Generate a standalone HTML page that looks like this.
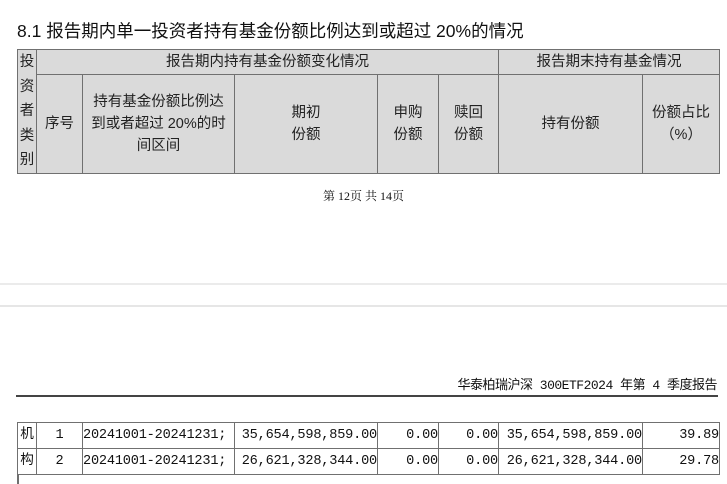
<!DOCTYPE html>
<html><head><meta charset="utf-8"><style>
body{margin:0;width:727px;height:480px;background:#fff;position:relative;overflow:hidden;font-family:"Liberation Serif","Noto Serif CJK SC","Noto Sans CJK SC",serif;color:#111}
.a{position:absolute}
.title{left:17px;top:18px;font-size:17.5px;white-space:nowrap;font-family:"Liberation Sans","Noto Sans CJK SC",sans-serif}
table{position:absolute;border-collapse:collapse;table-layout:fixed}
td{border:1.5px solid #707070;padding:0;text-align:center;font-family:"Liberation Sans","Noto Sans CJK SC",sans-serif;font-size:14.5px;color:#222;line-height:22px}
.h td{background:#dadada}
.d td{font-family:"Liberation Mono","Noto Sans CJK SC",monospace;font-size:13.6px;letter-spacing:-0.2px;color:#111;height:25px;line-height:25px;white-space:nowrap;overflow:hidden}
.r{text-align:right}
</style></head><body>
<div class="a title">8.1 报告期内单一投资者持有基金份额比例达到或超过 20%的情况</div>
<table class="h" style="left:17px;top:49px;width:702px">
<colgroup><col style="width:19px"><col style="width:46px"><col style="width:152px"><col style="width:143px"><col style="width:61px"><col style="width:60px"><col style="width:144px"><col style="width:77px"></colgroup>
<tr style="height:25px"><td rowspan="2" style="line-height:24.5px;vertical-align:top">投<br>资<br>者<br>类<br>别</td><td colspan="5">报告期内持有基金份额变化情况</td><td colspan="2">报告期末持有基金情况</td></tr>
<tr style="height:99px"><td>序号</td><td>持有基金份额比例达<br>到或者超过 20%的时<br>间区间</td><td>期初<br>份额</td><td>申购<br>份额</td><td>赎回<br>份额</td><td>持有份额</td><td>份额占比<br>（%）</td></tr>
</table>
<div class="a" style="left:0;width:727px;top:187px;text-align:center;font-size:12px">第 12页 共 14页</div>
<div class="a" style="left:0;width:727px;top:283px;height:2px;background:#ebebeb"></div>
<div class="a" style="left:0;width:727px;top:305px;height:2px;background:#e6e6e6"></div>
<div class="a" style="right:10px;top:374px;font-size:13px;font-family:'Liberation Mono','Noto Sans CJK SC',monospace;letter-spacing:-0.5px">华泰柏瑞沪深 300ETF2024 年第 4 季度报告</div>
<div class="a" style="left:16px;width:702px;top:395px;height:2px;background:#444"></div>
<table class="d" style="left:17px;top:422px;width:702px">
<colgroup><col style="width:19px"><col style="width:46px"><col style="width:152px"><col style="width:143px"><col style="width:61px"><col style="width:60px"><col style="width:144px"><col style="width:77px"></colgroup>
<tr><td>机</td><td>1</td><td style="text-align:left">20241001-20241231;</td><td class="r">35,654,598,859.00</td><td class="r">0.00</td><td class="r">0.00</td><td class="r">35,654,598,859.00</td><td class="r">39.89</td></tr>
<tr><td>构</td><td>2</td><td style="text-align:left">20241001-20241231;</td><td class="r">26,621,328,344.00</td><td class="r">0.00</td><td class="r">0.00</td><td class="r">26,621,328,344.00</td><td class="r">29.78</td></tr>
</table>
<div class="a" style="left:17px;top:474px;width:1.5px;height:10px;background:#707070"></div>
</body></html>
